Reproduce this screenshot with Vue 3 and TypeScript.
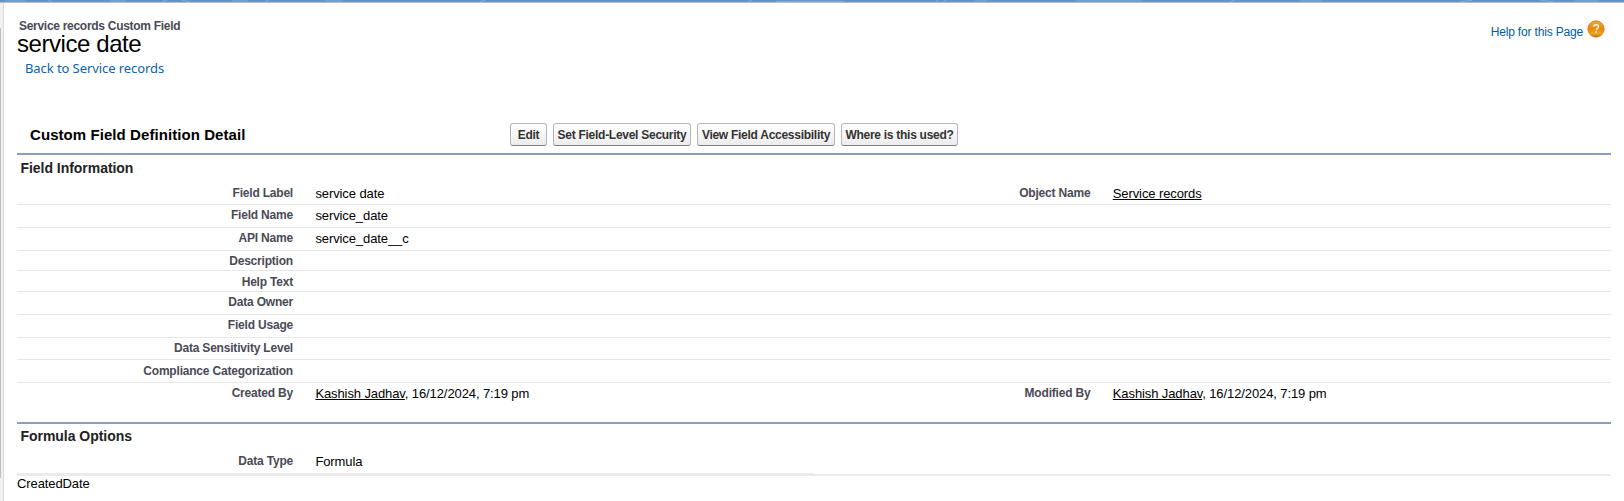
<script setup lang="ts">
interface Cell {
  label: string
  link?: string
  text?: string
}

interface Row {
  left: Cell
  right?: Cell
  height: number
  drop?: boolean
  last?: boolean
}

interface Action {
  text: string
  width: number
}

const buttons: Action[] = [
  { text: 'Edit', width: 37 },
  { text: 'Set Field-Level Security', width: 138 },
  { text: 'View Field Accessibility', width: 138 },
  { text: 'Where is this used?', width: 117 },
]

const rows: Row[] = [
  { left: { label: 'Field Label', text: 'service date' }, right: { label: 'Object Name', link: 'Service records' }, height: 22 },
  { left: { label: 'Field Name', text: 'service_date' }, height: 23 },
  { left: { label: 'API Name', text: 'service_date__c' }, height: 23 },
  { left: { label: 'Description' }, height: 20 },
  { left: { label: 'Help Text' }, height: 21, drop: true },
  { left: { label: 'Data Owner' }, height: 23 },
  { left: { label: 'Field Usage' }, height: 23 },
  { left: { label: 'Data Sensitivity Level' }, height: 22 },
  { left: { label: 'Compliance Categorization' }, height: 23, drop: true },
  {
    left: { label: 'Created By', link: 'Kashish Jadhav', text: ', 16/12/2024, 7:19 pm' },
    right: { label: 'Modified By', link: 'Kashish Jadhav', text: ', 16/12/2024, 7:19 pm' },
    height: 39,
    last: true,
  },
]
</script>

<template>
  <div class="page">
    <div class="banner">
      <svg width="1624" height="2" viewBox="0 0 1624 2">
        <g stroke="#9bb8da" stroke-width="1" fill="none" opacity=".6">
          <path d="M5 1h20M48 0l4 2M110 1h16M162 2l5-2M182 0l8 2M232 1h16M265 2l4-2M325 1h18M480 2l5-2M776 1.5h68M748 2l4-2M936 0l2 2M943 2l3-2M975 1h12M1076 1h65M1230 2l5-2M1300 1h22M1460 2l12-2M1540 0l14 2M1575 1h24" />
        </g>
      </svg>
    </div>
    <div class="body">
      <aside class="rail"><div class="thumb"></div></aside>
      <main class="content">
        <header class="head">
          <div>
            <div class="type">Service records Custom Field</div>
            <h1>service date</h1>
            <a class="back">Back to Service records</a>
          </div>
          <a class="help">
            <span>Help for this Page</span>
            <svg width="18" height="18" viewBox="0 0 18 18">
              <defs>
                <linearGradient id="orb" x1="0" y1="0" x2="0" y2="1">
                  <stop offset="0" stop-color="#f0a83c" />
                  <stop offset=".5" stop-color="#e8860c" />
                  <stop offset=".78" stop-color="#f5a51c" />
                  <stop offset="1" stop-color="#a8702c" />
                </linearGradient>
              </defs>
              <circle cx="9" cy="9" r="8.2" fill="url(#orb)" stroke="#c98224" stroke-width=".8" />
              <path d="M6.7 7C6.7 5.5 7.7 4.8 9.1 4.8s2.4.8 2.4 2c0 1.6-2.3 1.7-2.3 3.5" fill="none" stroke="#fff3d8" stroke-width="1.5" />
              <rect x="8.4" y="11.3" width="1.6" height="1.6" fill="#fff3d8" />
            </svg>
          </a>
        </header>
        <div class="bar">
          <h2>Custom Field Definition Detail</h2>
          <div class="buttons">
            <button v-for="b in buttons" :key="b.text" :style="{ width: b.width + 'px' }">{{ b.text }}</button>
          </div>
        </div>
        <h3>Field Information</h3>
        <section>
          <div
            v-for="r in rows"
            :key="r.left.label"
            class="row"
            :class="{ drop: r.drop, last: r.last }"
            :style="{ height: r.height + 'px' }"
          >
            <div class="label">{{ r.left.label }}</div>
            <div class="value"><a v-if="r.left.link">{{ r.left.link }}</a>{{ r.left.text }}</div>
            <template v-if="r.right">
              <div class="label">{{ r.right.label }}</div>
              <div class="value"><a v-if="r.right.link">{{ r.right.link }}</a>{{ r.right.text }}</div>
            </template>
          </div>
        </section>
        <h3 class="formula">Formula Options</h3>
        <div class="row type-row last">
          <div class="label">Data Type</div>
          <div class="value">Formula</div>
        </div>
        <div class="rule"><div class="rule-half"></div></div>
        <div class="code">CreatedDate</div>
      </main>
    </div>
  </div>
</template>

<style>
body {
  background: #fff;
}
</style>

<style scoped>
.page {
  height: 501px;
  overflow: hidden;
  display: flex;
  flex-direction: column;
  font-family: "Liberation Sans", Arial, sans-serif;
  color: #000;
}
.banner {
  height: 2px;
  flex: none;
  background: #6494c6;
  border-bottom: 1px solid #bbbdc4;
}
.banner svg {
  display: block;
}
.body {
  flex: 1;
  display: flex;
}
.rail {
  width: 3px;
  background: #f1f1f1;
  border-right: 1px solid #dcdcdc;
  padding-top: 25px;
}
.thumb {
  width: 1px;
  height: 450px;
  background: #c1c1c1;
}
.content {
  width: 1594px;
  margin-left: 13px;
}
.head {
  display: flex;
  justify-content: space-between;
  height: 115px;
}
.type {
  margin: 16px 0 0 2px;
  font-size: 12px;
  line-height: 14px;
  font-weight: bold;
  letter-spacing: -0.29px;
  color: #4a4a56;
}
h1 {
  margin: -1px 0 0;
  font-size: 24px;
  font-weight: normal;
  line-height: 24px;
  letter-spacing: -0.43px;
}
.back {
  display: block;
  margin: 3px 0 0 8px;
  font: 13px/18px "Noto Sans", sans-serif;
  letter-spacing: -0.08px;
  color: #0a64b0;
}
.help {
  display: flex;
  height: 18px;
  margin: 17px 6px 0 0;
  gap: 4px;
  font-size: 12px;
  line-height: 24px;
  letter-spacing: -0.17px;
  color: #015ba7;
}
.bar {
  display: flex;
  height: 35px;
  border-bottom: 2px solid #8e9dbe;
}
h2 {
  width: 480px;
  margin: 7px 0 0 13px;
  font-size: 15px;
  line-height: 20px;
  letter-spacing: 0.07px;
}
.buttons {
  display: flex;
  gap: 6px;
  padding-top: 5px;
}
button {
  height: 23px;
  padding: 0;
  border: 1px solid #b5b5b5;
  border-bottom-color: #7f7f7f;
  border-radius: 3px;
  background: linear-gradient(#fff, #ececec);
  font: bold 12px/20px "Liberation Sans", Arial, sans-serif;
  letter-spacing: -0.27px;
  color: #333;
  white-space: nowrap;
}
h3 {
  margin: 0 0 0 3.5px;
  height: 28px;
  font-size: 14px;
  line-height: 26px;
  letter-spacing: -0.04px;
  color: #222;
}
.row {
  display: flex;
  box-sizing: border-box;
  border-bottom: 1px solid #e8e8e8;
  padding-top: 3px;
}
.row.drop {
  padding-top: 4px;
}
.row.last {
  border: 0;
}
.label {
  flex: none;
  width: 276px;
  font-size: 12px;
  line-height: 14px;
  font-weight: bold;
  text-align: right;
  letter-spacing: -0.2px;
  color: #4a4a56;
}
.value {
  flex: none;
  width: 499px;
  margin-left: 22.4px;
  font-size: 13px;
  line-height: 16px;
  letter-spacing: -0.1px;
  white-space: nowrap;
}
.value a {
  text-decoration: underline;
}
.formula {
  height: 27px;
  line-height: 24px;
  border-top: 2px solid #8e9dbe;
  margin-left: 0;
  padding-left: 3.5px;
}
.type-row {
  height: 22px;
}
.rule {
  height: 3px;
  background: linear-gradient(#fff 1px, #ebebeb 1px);
}
.rule-half {
  width: 797px;
  height: 3px;
  background: #ebebeb;
}
.code {
  font-size: 13px;
  line-height: 16px;
  letter-spacing: -0.1px;
}
</style>
